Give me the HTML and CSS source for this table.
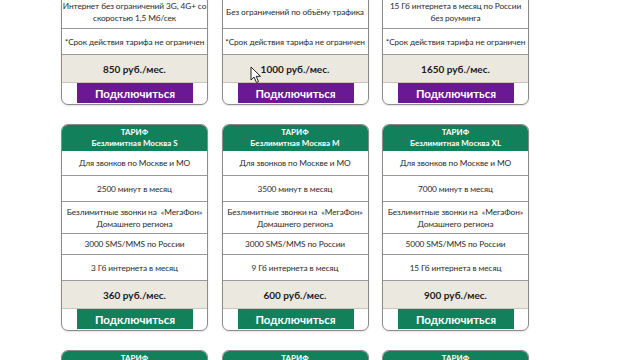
FILE: index.html
```html
<!DOCTYPE html>
<html lang="ru">
<head>
<meta charset="utf-8">
<title>Тарифы</title>
<link rel="stylesheet" href="styles.css">
</head>
<body>
<div class="page">
  <section class="tariffs tariffs--first">
    <div class="card card--purple">
      <div class="row row--tall">Безлимитные звонки на все номера России</div>
      <div class="row row--net">Интернет без ограничений 3G, 4G+ со<br>скоростью 1,5 Мб/сек</div>
      <div class="row row--note">*Срок действия тарифа не ограничен</div>
      <div class="row price">850 руб./мес.</div>
      <div class="action"><button class="btn btn--purple">Подключиться</button></div>
    </div>
    <div class="card card--purple">
      <div class="row row--tall">Безлимитные звонки на все номера России</div>
      <div class="row row--net">Без ограничений по объёму трафика</div>
      <div class="row row--note">*Срок действия тарифа не ограничен</div>
      <div class="row price">1000 руб./мес.</div>
      <div class="action"><button class="btn btn--purple">Подключиться</button></div>
    </div>
    <div class="card card--purple">
      <div class="row row--tall">Безлимитные звонки на все номера России</div>
      <div class="row row--net">15 Гб интернета в месяц по России<br>без роуминга</div>
      <div class="row row--note">*Срок действия тарифа не ограничен</div>
      <div class="row price">1650 руб./мес.</div>
      <div class="action"><button class="btn btn--purple">Подключиться</button></div>
    </div>
  </section>

  <section class="tariffs">
    <div class="card">
      <div class="head">ТАРИФ<br>Безлимитная Москва S</div>
      <div class="row row--a">Для звонков по Москве и МО</div>
      <div class="row row--b">2500 минут в месяц</div>
      <div class="row row--c">Безлимитные звонки на&nbsp; «МегаФон»<br>Домашнего региона</div>
      <div class="row row--d">3000 SMS/MMS по России</div>
      <div class="row row--e">3 Гб интернета в месяц</div>
      <div class="row price">360 руб./мес.</div>
      <div class="action"><button class="btn">Подключиться</button></div>
    </div>
    <div class="card">
      <div class="head">ТАРИФ<br>Безлимитная Москва M</div>
      <div class="row row--a">Для звонков по Москве и МО</div>
      <div class="row row--b">3500 минут в месяц</div>
      <div class="row row--c">Безлимитные звонки на&nbsp; «МегаФон»<br>Домашнего региона</div>
      <div class="row row--d">3000 SMS/MMS по России</div>
      <div class="row row--e">9 Гб интернета в месяц</div>
      <div class="row price">600 руб./мес.</div>
      <div class="action"><button class="btn">Подключиться</button></div>
    </div>
    <div class="card">
      <div class="head">ТАРИФ<br>Безлимитная Москва XL</div>
      <div class="row row--a">Для звонков по Москве и МО</div>
      <div class="row row--b">7000 минут в месяц</div>
      <div class="row row--c">Безлимитные звонки на&nbsp; «МегаФон»<br>Домашнего региона</div>
      <div class="row row--d">5000 SMS/MMS по России</div>
      <div class="row row--e">15 Гб интернета в месяц</div>
      <div class="row price">900 руб./мес.</div>
      <div class="action"><button class="btn">Подключиться</button></div>
    </div>
  </section>

  <section class="tariffs">
    <div class="card">
      <div class="head">ТАРИФ<br>Безлимитная Россия S</div>
      <div class="row row--a">Для звонков по всей России</div>
    </div>
    <div class="card">
      <div class="head">ТАРИФ<br>Безлимитная Россия M</div>
      <div class="row row--a">Для звонков по всей России</div>
    </div>
    <div class="card">
      <div class="head">ТАРИФ<br>Безлимитная Россия XL</div>
      <div class="row row--a">Для звонков по всей России</div>
    </div>
  </section>
</div>
<svg class="cursor" width="12" height="18" viewBox="0 0 12 18" aria-hidden="true">
  <path d="M1 1 L1 14 L4 11 L6.5 16.5 L8.5 15.6 L6.2 10.3 L10.5 10.3 Z" fill="#fff" stroke="#222" stroke-width="1" stroke-linejoin="round"/>
</svg>
</body>
</html>
```

FILE: styles.css
```css
html, body {
  margin: 0;
  padding: 0;
  height: 100%;
  overflow: hidden;
  background: #ffffff;
}

body {
  position: relative;
  font-family: Lato, "Open Sans", "Noto Sans", sans-serif;
  color: #2b2b2b;
}

.page {
  display: flex;
  flex-direction: column;
  gap: 19px;
  padding-left: 61px;
}

.tariffs {
  display: grid;
  grid-template-columns: 147px 147px 147px;
  column-gap: 13.5px;
}

.tariffs--first {
  margin-top: -41px;
}

.card {
  display: flex;
  flex-direction: column;
  border: 1px solid #8c8c8c;
  border-radius: 7px;
  overflow: hidden;
  background: #fff;
  box-shadow: 0 1px 2px rgba(0, 0, 0, 0.12);
}

.head {
  height: 26px;
  background: #12805a;
  color: #fff;
  font-weight: 700;
  font-size: 8px;
  line-height: 11px;
  text-align: center;
  display: flex;
  flex-direction: column;
  justify-content: center;
}

.row {
  box-sizing: border-box;
  display: flex;
  align-items: center;
  justify-content: center;
  text-align: center;
  padding: 0 1px;
  font-size: 8.3px;
  letter-spacing: -0.1px;
  line-height: 12px;
  white-space: nowrap;
  border-top: 1px solid #9a9a9a;
}

.head + .row,
.card > .row:first-child {
  border-top: 0;
}

.row--tall { height: 34px; }
.row--net { height: 34px; }
.row--note { height: 26px; }

.row--a { height: 24px; }
.row--b { height: 26px; }
.row--c { height: 32px; }
.row--d { height: 21px; }
.row--e { height: 26px; }

.price {
  height: 28px;
  background: #ebe8e0;
  font-weight: 700;
  font-size: 10px;
  letter-spacing: 0;
  color: #1c1c1c;
}

.action {
  height: 22px;
  border-top: 1px solid #c9c5bb;
  box-sizing: border-box;
  padding: 0 14px 0 15px;
}

.btn {
  display: block;
  width: 100%;
  height: 20px;
  border: 0;
  margin: 0;
  padding: 0;
  background: #12805a;
  color: #fff;
  font-family: Lato, "Open Sans", "Noto Sans", sans-serif;
  font-weight: 700;
  font-size: 11.5px;
}

.btn--purple {
  background: #6b1895;
}

.cursor {
  position: absolute;
  left: 250px;
  top: 66px;
}
```
